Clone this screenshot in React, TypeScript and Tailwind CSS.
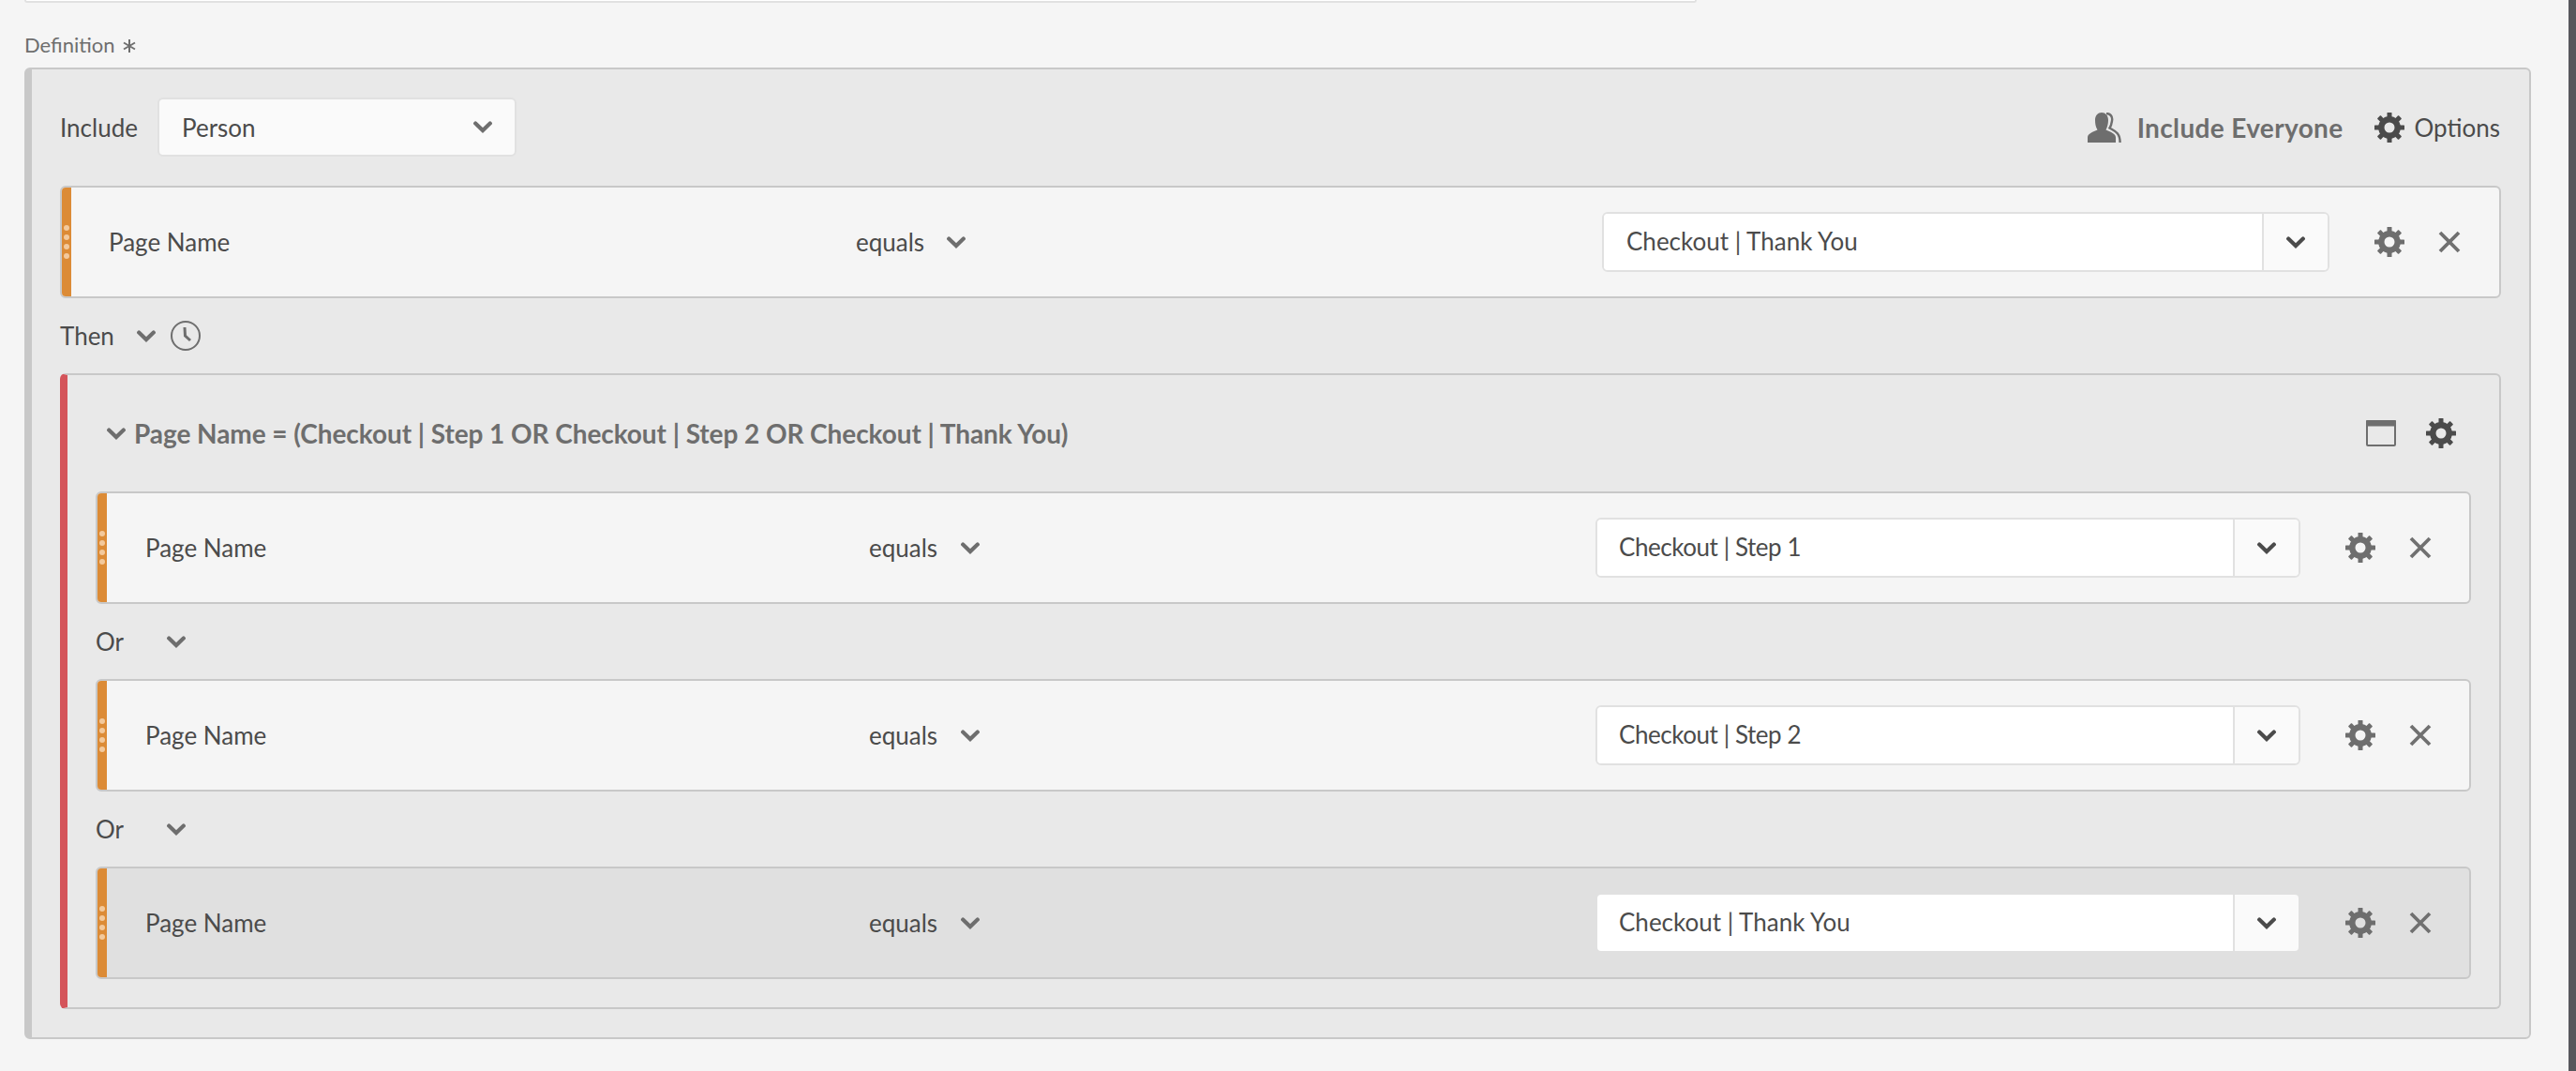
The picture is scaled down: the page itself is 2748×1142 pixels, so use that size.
import React from 'react'

const font = { fontFamily: '"Lato", "Liberation Sans", sans-serif' }

function Chevron({ className = 'text-[#6e6e6e]' }: { className?: string }) {
  return (
    <svg width="20" height="13" viewBox="0 0 20 13" fill="none" className={className}>
      <path d="M2.2 2.6L10 10L17.8 2.6" stroke="currentColor" strokeWidth="4.2" strokeLinecap="round" strokeLinejoin="miter" />
    </svg>
  )
}

function Gear({ className = 'text-[#6e6e6e]' }: { className?: string }) {
  const angles = [0, 45, 90, 135, 180, 225, 270, 315]
  return (
    <svg width="32" height="32" viewBox="0 0 32 32" className={className}>
      {angles.map(a => (
        <rect key={a} x="13.5" y="0" width="5" height="8" rx="0.6" fill="currentColor" transform={`rotate(${a} 16 16)`} />
      ))}
      <circle cx="16" cy="16" r="8.7" fill="none" stroke="currentColor" strokeWidth="6.4" />
    </svg>
  )
}

function Close() {
  return (
    <svg width="24" height="24" viewBox="0 0 24 24" fill="none" className="text-[#707070]">
      <path d="M2 2L22 22M22 2L2 22" stroke="currentColor" strokeWidth="3.8" />
    </svg>
  )
}

function Handle() {
  return (
    <div className="w-[10px] shrink-0 self-stretch bg-[#dc8b36] flex flex-col items-center justify-center gap-[4px]">
      <span className="w-[6px] h-[6px] rounded-full bg-[#f3c99c]" />
      <span className="w-[6px] h-[6px] rounded-full bg-[#f3c99c]" />
      <span className="w-[6px] h-[6px] rounded-full bg-[#f3c99c]" />
      <span className="w-[6px] h-[6px] rounded-full bg-[#f3c99c]" />
    </div>
  )
}

type RuleProps = {
  value: string
  nested?: boolean
  active?: boolean
  tight?: boolean
}

function Rule({ value, nested, active, tight }: RuleProps) {
  return (
    <div className={`h-[120px] flex items-center border-2 border-[#c8c8c8] rounded-md overflow-hidden ${active ? 'bg-[#e0e0e0]' : 'bg-[#f5f5f5]'}`}>
      <Handle />
      <div className={nested ? 'w-[813px] pl-[41px] shrink-0' : 'w-[837px] pl-[40px] shrink-0'}>Page Name</div>
      <div className={nested ? 'w-[775px] shrink-0 flex items-center gap-[25px]' : 'w-[796px] shrink-0 flex items-center gap-[24px]'}>
        <span>equals</span>
        <Chevron />
      </div>
      <div className={`flex h-[64px] shrink-0 border-2 rounded-md overflow-hidden ${active ? 'border-[#e0e0e0]' : 'border-[#e1e1e1]'} ${nested ? 'w-[752px]' : 'w-[776px]'}`}>
        <div className={`flex-1 bg-white flex items-center pb-[2px] ${nested ? 'pl-[23px]' : 'pl-[24px]'} ${tight ? 'tracking-[-0.45px]' : ''}`}>{value}</div>
        <div className="w-[70px] shrink-0 border-l-2 border-[#e1e1e1] bg-[#fafafa] flex items-center justify-center">
          <Chevron className="text-[#4b4b4b]" />
        </div>
      </div>
      <div className="ml-[48px] flex items-center gap-[36px]">
        <Gear />
        <Close />
      </div>
    </div>
  )
}

export default function App() {
  return (
    <div className="flex min-h-[1142px] bg-[#f5f5f5] text-[26px] leading-none text-[#4b4b4b]" style={font}>
      <div className="flex-1 pl-[26px] pr-[40px]">
        <div className="w-[1784px] h-[3px] bg-white border-b-2 border-x-2 border-[#e1e1e1] rounded-b-md" />

        <div className="h-[69px] pt-[34px] flex items-start gap-[8px] text-[22px] text-[#6e6e6e]">
          <span>Definition</span>
          <svg width="14" height="14" viewBox="0 0 14 14" className="mt-[5px] text-[#6e6e6e]">
            <path d="M7 0V14M1 3.5L13 10.5M13 3.5L1 10.5" stroke="currentColor" strokeWidth="2" />
          </svg>
        </div>

        <div className="h-[1036px] bg-[#e9e9e9] border-2 border-l-8 border-[#c8c8c8] rounded-md pt-[31px] px-[30px]">
          <div className="h-[61px] flex items-center">
            <span className="w-[104px] shrink-0">Include</span>
            <div className="w-[383px] h-[63px] bg-[#fafafa] border-2 border-[#e1e1e1] rounded-md flex items-center justify-between pl-[24px] pr-[24px]">
              <span>Person</span>
              <Chevron />
            </div>
            <div className="ml-auto flex items-center text-[#6e6e6e]">
              <svg width="36" height="32" viewBox="0 0 36 32" className="mr-[17px]">
                <path d="M0 32V26.5C0 22.5 6 20.5 10.5 18.5C8.5 15 8 12 8 8C8 3 11 0 15 0C19 0 22 3 22 8C22 12 21 15.5 19.5 18.5C24 20.5 30 22.5 30 26.5V32Z" fill="#6e6e6e" />
                <path d="M20 1C24 1 27 4 26 9C25.5 12.5 24.5 15 23.5 16.5C28.5 19.5 34.6 21 34.6 32" fill="none" stroke="#6e6e6e" strokeWidth="2.4" />
              </svg>
              <span className="text-[28px] font-bold tracking-[0.35px] mr-[33px]">Include Everyone</span>
              <Gear className="text-[#4b4b4b] mr-[11px]" />
              <span className="mr-[1px] text-[#4b4b4b]">Options</span>
            </div>
          </div>

          <div className="mt-[32px]">
            <Rule value="Checkout | Thank You" />
          </div>

          <div className="h-[80px] flex items-center">
            <span className="w-[82px] shrink-0">Then</span>
            <Chevron />
            <svg width="32" height="32" viewBox="0 0 32 32" fill="none" className="ml-[16px] text-[#6e6e6e]">
              <circle cx="16" cy="16" r="15" stroke="currentColor" strokeWidth="2" />
              <path d="M15 7L15.5 16L21 21" stroke="currentColor" strokeWidth="3" />
            </svg>
          </div>

          <div className="h-[678px] border-2 border-l-8 border-y-[#c8c8c8] border-r-[#c8c8c8] border-l-[#d4545a] rounded-md px-[30px]">
            <div className="h-[124px] flex items-center">
              <Chevron className="ml-[12px] mr-[9px] text-[#6e6e6e]" />
              <span className="text-[28px] font-bold tracking-[-0.07px] text-[#6e6e6e]">Page Name = (Checkout | Step 1 OR Checkout | Step 2 OR Checkout | Thank You)</span>
              <svg width="32" height="28" viewBox="0 0 32 28" className="ml-auto mr-[32px]">
                <rect x="1" y="1" width="30" height="26" rx="1" fill="none" stroke="#6e6e6e" strokeWidth="2" />
                <rect x="0" y="0" width="32" height="6.5" rx="1" fill="#6e6e6e" />
              </svg>
              <Gear className="text-[#4b4b4b] mr-[16px]" />
            </div>

            <Rule nested tight value="Checkout | Step 1" />
            <div className="h-[80px] flex items-center">
              <span className="w-[76px] shrink-0">Or</span>
              <Chevron />
            </div>
            <Rule nested tight value="Checkout | Step 2" />
            <div className="h-[80px] flex items-center">
              <span className="w-[76px] shrink-0">Or</span>
              <Chevron />
            </div>
            <Rule nested active value="Checkout | Thank You" />
          </div>
        </div>
      </div>
      <div className="w-[8px] shrink-0 bg-[#57575c]" />
    </div>
  )
}
